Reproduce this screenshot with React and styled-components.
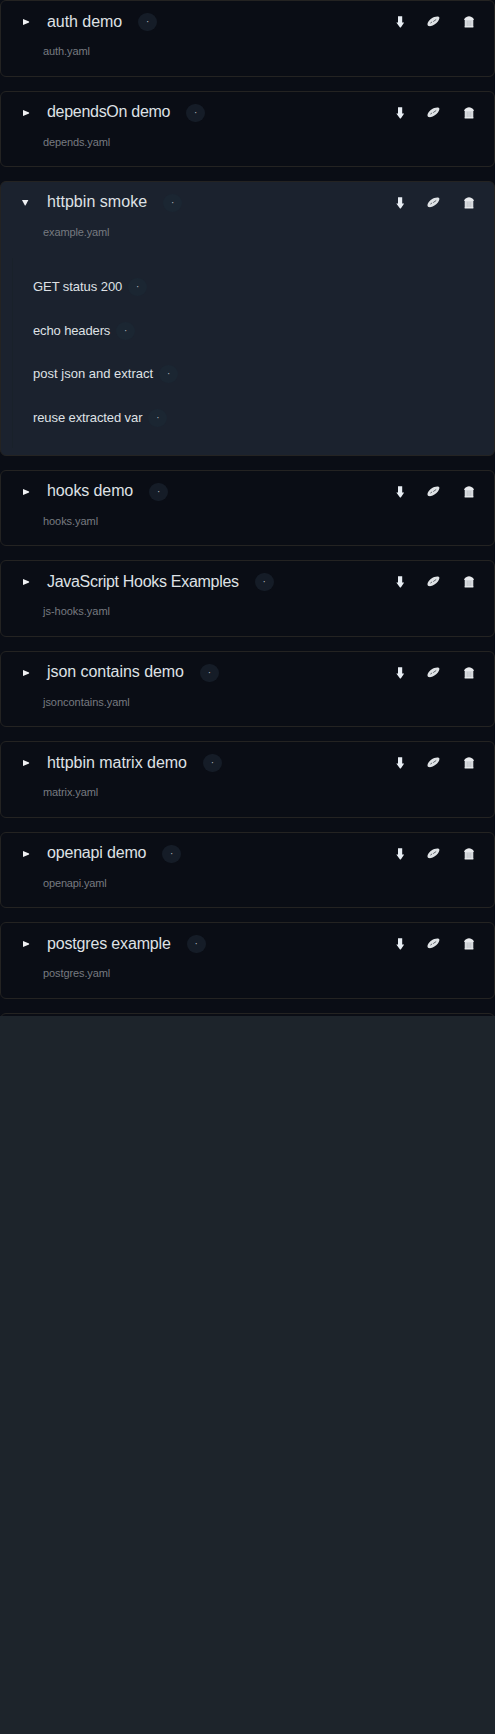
import React from "react";
import styled, { createGlobalStyle } from "styled-components";

const GlobalStyle = createGlobalStyle`
  * { box-sizing: border-box; }
  body {
    margin: 0;
    background: #1d242b;
    font-family: "Liberation Sans", Arial, sans-serif;
    color: #dfe1e5;
  }
`;

const Viewport = styled.main`
  height: 1016px;
  overflow: hidden;
  background: #0a0d15;
`;

const SuiteList = styled.div`
  display: flex;
  flex-direction: column;
  gap: 14px;
  padding-top: 0.1px;
`;

const Card = styled.section`
  flex: none;
  height: ${(p) => (p.$open ? "274.95px" : "76.45px")};
  border: 1px solid #242322;
  border-radius: 6px;
  background: ${(p) => (p.$open ? "#1b222e" : "#0a0d15")};
  padding: 12px 20px 0 21px;
`;

const Header = styled.div`
  display: flex;
  align-items: center;
  height: 18px;
`;

const Toggle = styled.button`
  display: flex;
  width: 25px;
  padding: 0;
  border: 0;
  background: none;
  color: #f0f1f3;
`;

const Title = styled.h3`
  margin: -1px 0 0;
  font-size: 16px;
  font-weight: 400;
  line-height: 18px;
  white-space: nowrap;
  letter-spacing: ${(p) => p.$track}px;
`;

const Badge = styled.span`
  display: flex;
  flex: none;
  align-items: center;
  justify-content: center;
  width: 19px;
  height: 18px;
  margin-left: ${(p) => p.$gap}px;
  border-radius: 9px;
  background: ${(p) => (p.$open ? "#1b2632" : "#151c27")};
  color: #b4b6ba;
  font-size: 10px;
  line-height: 18px;
`;

const Actions = styled.div`
  display: flex;
  align-items: center;
  margin-left: auto;
`;

const IconButton = styled.button`
  display: flex;
  padding: 0;
  border: 0;
  background: none;
  margin-left: ${(p) => p.$gap || 0}px;
`;

const FileName = styled.div`
  margin: 13px 0 0 21px;
  font-size: 11px;
  line-height: 14px;
  color: #777a80;
  white-space: nowrap;
  letter-spacing: ${(p) => p.$track}px;
`;

const Steps = styled.div`
  margin: 19px 0 0 -10px;
  padding: 20px 0 0 20px;
  height: 190px;
  border-left: 1px solid #19212a;
  display: flex;
  flex-direction: column;
  gap: 25.6px;
`;

const Step = styled.div`
  display: flex;
  align-items: center;
  height: 18px;
`;

const StepName = styled.span`
  font-size: 13px;
  line-height: 18px;
  white-space: nowrap;
  letter-spacing: ${(p) => p.$track}px;
`;

function ToggleIcon({ open }) {
  return (
    <svg width="8" height="8" viewBox="0 0 8 8" fill="currentColor">
      <path d={open ? "M0 1h6.4L3.5 6.6h-.6z" : "M1 .9v6L7.1 4.4v-.8z"} />
    </svg>
  );
}

function DownloadIcon() {
  return (
    <svg width="8" height="12" viewBox="0 0 8 12">
      <path d="M2 .2h4.2v6.4h1.9L4.8 11.6H4L.3 6.6H2z" fill="#e8edf3" />
    </svg>
  );
}

function EditIcon() {
  return (
    <svg width="13" height="12" viewBox="0 0 13 12">
      <path
        d="M.5 8C.7 5.6 4 2.1 7.2 1.1c2.4-.7 4.7-.7 5.1.2.5 1.5-.8 4.1-3.1 6C6.4 9.6 3.2 10.7 1.6 10.1.8 9.8.4 9 .5 8z"
        fill="#dfe2e5"
      />
      <path d="M3.4 7.1l1.7-1.2M6.2 5.6l3-2.1" stroke="#565b62" strokeWidth=".9" />
    </svg>
  );
}

function TrashIcon() {
  return (
    <svg width="10" height="12" viewBox="0 0 10 12">
      <path d="M3 .8C4 .1 6 .1 7 .8l2.1 1.1.9 2.2H0l.9-2.2z" fill="#e8eaed" />
      <path d="M.7 4h8.6v7.3H.7z" fill="#d8dbdf" />
      <path d="M3.3 4.8v5.5M5 4.8v5.5M6.7 4.8v5.5" stroke="#b9bec3" strokeWidth=".6" />
      <path d="M.7 10.3h8.6v1H.7z" fill="#eceef0" />
    </svg>
  );
}

const suites = [
  { name: "auth demo", track: -0.05, file: "auth.yaml", fileTrack: -0.08 },
  { name: "dependsOn demo", track: -0.29, file: "depends.yaml", fileTrack: -0.12 },
  {
    name: "httpbin smoke",
    track: 0.04,
    file: "example.yaml",
    fileTrack: -0.12,
    steps: [
      { name: "GET status 200", track: -0.06 },
      { name: "echo headers", track: -0.13 },
      { name: "post json and extract", track: 0.01 },
      { name: "reuse extracted var", track: -0.1 },
    ],
  },
  { name: "hooks demo", track: -0.1, file: "hooks.yaml", fileTrack: -0.06 },
  { name: "JavaScript Hooks Examples", track: -0.3, file: "js-hooks.yaml", fileTrack: -0.02 },
  { name: "json contains demo", track: -0.05, file: "jsoncontains.yaml", fileTrack: -0.04 },
  { name: "httpbin matrix demo", track: -0.03, file: "matrix.yaml", fileTrack: -0.1 },
  { name: "openapi demo", track: -0.18, file: "openapi.yaml", fileTrack: -0.15 },
  { name: "postgres example", track: -0.16, file: "postgres.yaml", fileTrack: -0.1 },
];

function Suite({ suite }) {
  const open = Boolean(suite.steps);
  return (
    <Card $open={open}>
      <Header>
        <Toggle aria-expanded={open} aria-label="Toggle suite">
          <ToggleIcon open={open} />
        </Toggle>
        <Title $track={suite.track}>{suite.name}</Title>
        <Badge $gap={16} $open={open}>·</Badge>
        <Actions>
          <IconButton aria-label="Download"><DownloadIcon /></IconButton>
          <IconButton $gap={23} aria-label="Edit"><EditIcon /></IconButton>
          <IconButton $gap={24} aria-label="Delete"><TrashIcon /></IconButton>
        </Actions>
      </Header>
      <FileName $track={suite.fileTrack}>{suite.file}</FileName>
      {open && (
        <Steps>
          {suite.steps.map((step) => (
            <Step key={step.name}>
              <StepName $track={step.track}>{step.name}</StepName>
              <Badge $gap={6} $open>·</Badge>
            </Step>
          ))}
        </Steps>
      )}
    </Card>
  );
}

export default function App() {
  return (
    <>
      <GlobalStyle />
      <Viewport>
        <SuiteList>
          {suites.map((suite) => (
            <Suite key={suite.file} suite={suite} />
          ))}
          <Card />
        </SuiteList>
      </Viewport>
    </>
  );
}
